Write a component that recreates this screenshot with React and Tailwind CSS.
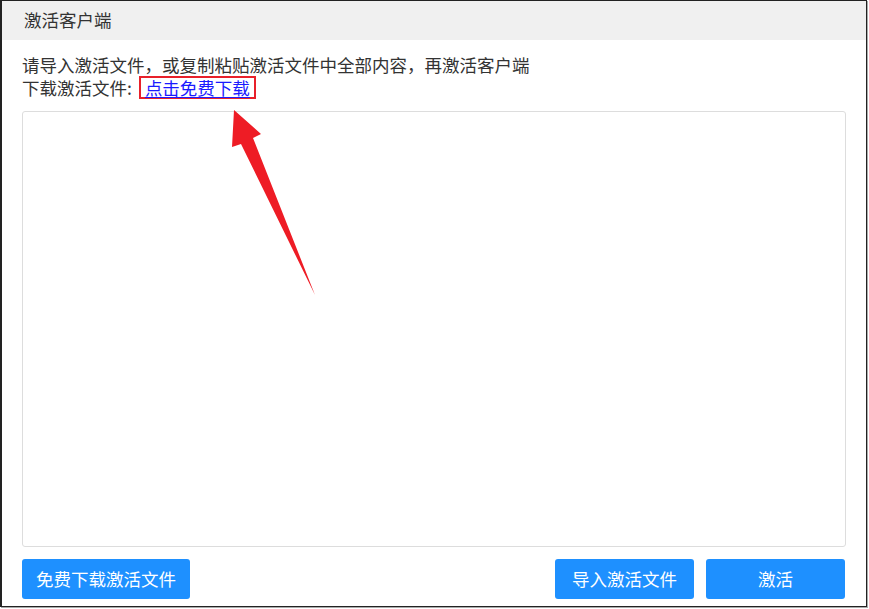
import { useState } from 'react';

const font = { fontFamily: '"Microsoft YaHei", "Noto Sans CJK SC", "Noto Sans", sans-serif' };

export default function App() {
  const [content, setContent] = useState('');

  return (
    <div className="bg-white w-[869px] h-[609px]" style={font}>
      <div className="relative flex flex-col w-[867px] h-[607px] border border-[#222] border-l-2 shadow-[1px_1px_0_#aaa] bg-white text-[17.5px] text-[#333]">
        <div className="h-[39px] shrink-0 flex items-center px-[22px] bg-[#f0f0f0] text-[#333]">激活客户端</div>

        <div className="flex-1 flex flex-col pt-[13px] pl-[20px] pr-[20px] pb-[7px]">
          <div className="leading-[23px]">
            <p>请导入激活文件，或复制粘贴激活文件中全部内容，再激活客户端</p>
            <p>
              下载激活文件:
              <span className="inline-block ml-[7px] border-2 border-[#e8202a] px-[4px] leading-[19px]">
                <a href="#" className="text-[#1a1aff] underline underline-offset-2">点击免费下载</a>
              </span>
            </p>
          </div>

          <textarea
            value={content}
            onChange={(e) => setContent(e.target.value)}
            className="mt-[12px] flex-1 w-full resize-none rounded-[3px] border border-[#ddd] outline-none p-2 text-[15px]"
          />

          <div className="mt-[12px] flex items-center gap-[12px] pr-[1px]">
            <button className="h-[40px] px-[14px] rounded-[3px] bg-[#1e90ff] text-white">免费下载激活文件</button>
            <div className="flex-1" />
            <button className="h-[40px] w-[139px] rounded-[3px] bg-[#1e90ff] text-white">导入激活文件</button>
            <button className="h-[40px] w-[139px] rounded-[3px] bg-[#1e90ff] text-white">激活</button>
          </div>
        </div>

        {/* annotation arrow */}
        <svg className="absolute left-0 top-0 pointer-events-none" width="869" height="609">
          <polygon points="232,109 259,133 251,137 313,294 239,143 230,146" fill="#ee1c25" />
        </svg>
      </div>
    </div>
  );
}
